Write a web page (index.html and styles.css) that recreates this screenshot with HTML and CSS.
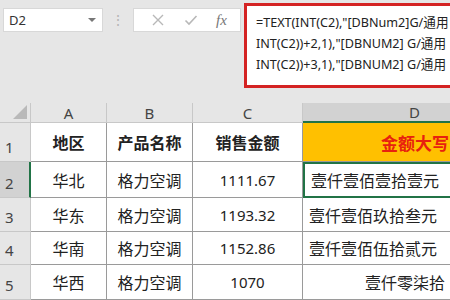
FILE: index.html
```html
<!DOCTYPE html>
<html lang="zh">
<head>
    <meta charset="UTF-8">
    <title>金额大写</title>
    <link rel="stylesheet" href="styles.css">
</head>
<body>
    <div class="toolbar">
        <div class="namebox">
            <span>D2</span>
            <span class="caret"></span>
        </div>
        <div class="grip">⋮</div>
        <div class="fxbox">
            <svg width="14" height="14" viewBox="0 0 14 14"><path d="M2 2 L12 12 M12 2 L2 12" stroke="#b8b8b8" stroke-width="1.4" fill="none"/></svg>
            <svg width="14" height="14" viewBox="0 0 14 14"><path d="M1.5 7.5 L5 11 L12.5 3" stroke="#b8b8b8" stroke-width="1.6" fill="none"/></svg>
            <span class="fx">fx</span>
        </div>
        <div class="formula">
            <div>=TEXT(INT(C2),"[DBNum2]G/通用</div>
            <div>INT(C2))+2,1),"[DBNUM2] G/通用</div>
            <div>INT(C2))+3,1),"[DBNUM2] G/通用</div>
        </div>
    </div>

    <div class="sheet">
        <div class="corner"><span></span></div>
        <div class="colhead">A</div>
        <div class="colhead">B</div>
        <div class="colhead">C</div>
        <div class="colhead sel">D</div>

        <div class="rowhead">1</div>
        <div class="cell bold">地区</div>
        <div class="cell bold">产品名称</div>
        <div class="cell bold">销售金额</div>
        <div class="cell title">金额大写</div>

        <div class="rowhead sel">2</div>
        <div class="cell">华北</div>
        <div class="cell">格力空调</div>
        <div class="cell num">1111.67</div>
        <div class="cell left active">壹仟壹佰壹拾壹元</div>

        <div class="rowhead">3</div>
        <div class="cell">华东</div>
        <div class="cell">格力空调</div>
        <div class="cell num">1193.32</div>
        <div class="cell left">壹仟壹佰玖拾叁元</div>

        <div class="rowhead">4</div>
        <div class="cell">华南</div>
        <div class="cell">格力空调</div>
        <div class="cell num">1152.86</div>
        <div class="cell left">壹仟壹佰伍拾贰元</div>

        <div class="rowhead">5</div>
        <div class="cell">华西</div>
        <div class="cell">格力空调</div>
        <div class="cell num">1070</div>
        <div class="cell left indent">壹仟零柒拾</div>
    </div>
</body>
</html>
```

FILE: styles.css
```css
body {
    margin: 0;
    width: 450px;
    height: 300px;
    overflow: hidden;
    background-color: #e6e6e6;
    font-family: "Noto Sans", "Noto Sans CJK SC", sans-serif;
}

.toolbar {
    display: flex;
    align-items: flex-start;
    width: 450px;
    height: 103px;
    padding-left: 3px;
    box-sizing: border-box;
    overflow: hidden;
}

.namebox {
    display: flex;
    flex-shrink: 0;
    align-items: center;
    justify-content: space-between;
    width: 100px;
    height: 24px;
    margin-top: 8px;
    padding: 0 6px 0 5px;
    box-sizing: border-box;
    background-color: #fff;
    border: 1px solid #d8d8d8;
    font-size: 13px;
    color: #333;
}

.caret {
    width: 0;
    height: 0;
    border-left: 4px solid transparent;
    border-right: 4px solid transparent;
    border-top: 4px solid #777;
}

.grip {
    flex-shrink: 0;
    width: 30px;
    margin-top: 10px;
    text-align: center;
    color: #b5b5b5;
    font-size: 14px;
}

.fxbox {
    display: flex;
    flex-shrink: 0;
    align-items: center;
    justify-content: space-around;
    width: 108px;
    height: 24px;
    margin-top: 8px;
    padding: 0 4px 0 8px;
    box-sizing: border-box;
    background-color: #fff;
    border: 1px solid #d8d8d8;
}

.fx {
    font-family: "Liberation Serif", serif;
    font-style: italic;
    font-size: 15px;
    color: #777;
}

.formula {
    flex-shrink: 0;
    width: 300px;
    height: 85px;
    margin-top: 3px;
    margin-left: 3px;
    padding: 6px 0 0 9px;
    box-sizing: border-box;
    background-color: #fff;
    border-top: 3px solid #d42323;
    border-bottom: 3px solid #d42323;
    border-left: 3px solid #d42323;
    font-size: 12.6px;
    line-height: 21px;
    color: #222;
    white-space: nowrap;
}

.sheet {
    display: grid;
    grid-template-columns: 31px 76px 86px 110px 147px;
    grid-template-rows: 20px 39px 36px 34px 33px 35px;
    background-color: #fff;
}

.corner {
    display: flex;
    align-items: flex-end;
    justify-content: flex-end;
    padding: 0 3px 3px 0;
    background-color: #e6e6e6;
    border-right: 1px solid #c8c8c8;
    border-bottom: 1px solid #c8c8c8;
}

.corner span {
    width: 0;
    height: 0;
    border-left: 14px solid transparent;
    border-bottom: 14px solid #b9b9b9;
}

.colhead {
    display: flex;
    align-items: center;
    justify-content: center;
    background-color: #e6e6e6;
    border-right: 1px solid #c8c8c8;
    border-bottom: 1px solid #c8c8c8;
    font-size: 15px;
    color: #444;
}

.colhead.sel {
    padding-left: 76px;
    background-color: #d2d2d2;
    border-right: none;
    border-bottom: 2px solid #217346;
}

.rowhead {
    display: flex;
    align-items: flex-end;
    padding: 0 0 4px 5px;
    background-color: #e6e6e6;
    border-right: 1px solid #c8c8c8;
    border-bottom: 1px solid #c8c8c8;
    font-size: 15px;
    color: #444;
}

.rowhead.sel {
    background-color: #d2d2d2;
    border-right: 2px solid #217346;
}

.cell {
    display: flex;
    align-items: center;
    justify-content: center;
    border-right: 1px solid #9a9a9a;
    border-bottom: 1px solid #9a9a9a;
    font-size: 16px;
    color: #222;
    white-space: nowrap;
}

.bold {
    font-weight: bold;
}

.num {
    font-size: 15px;
}

.title {
    justify-content: flex-end;
    padding-right: 1px;
    background-color: #ffc000;
    color: #e8210e;
    font-weight: bold;
    font-size: 17px;
    border-right: none;
}

.left {
    justify-content: flex-start;
    padding-left: 6px;
    border-right: none;
}

.indent {
    padding-left: 62px;
}

.active {
    border: 2px solid #217346;
    border-right: none;
}
```
